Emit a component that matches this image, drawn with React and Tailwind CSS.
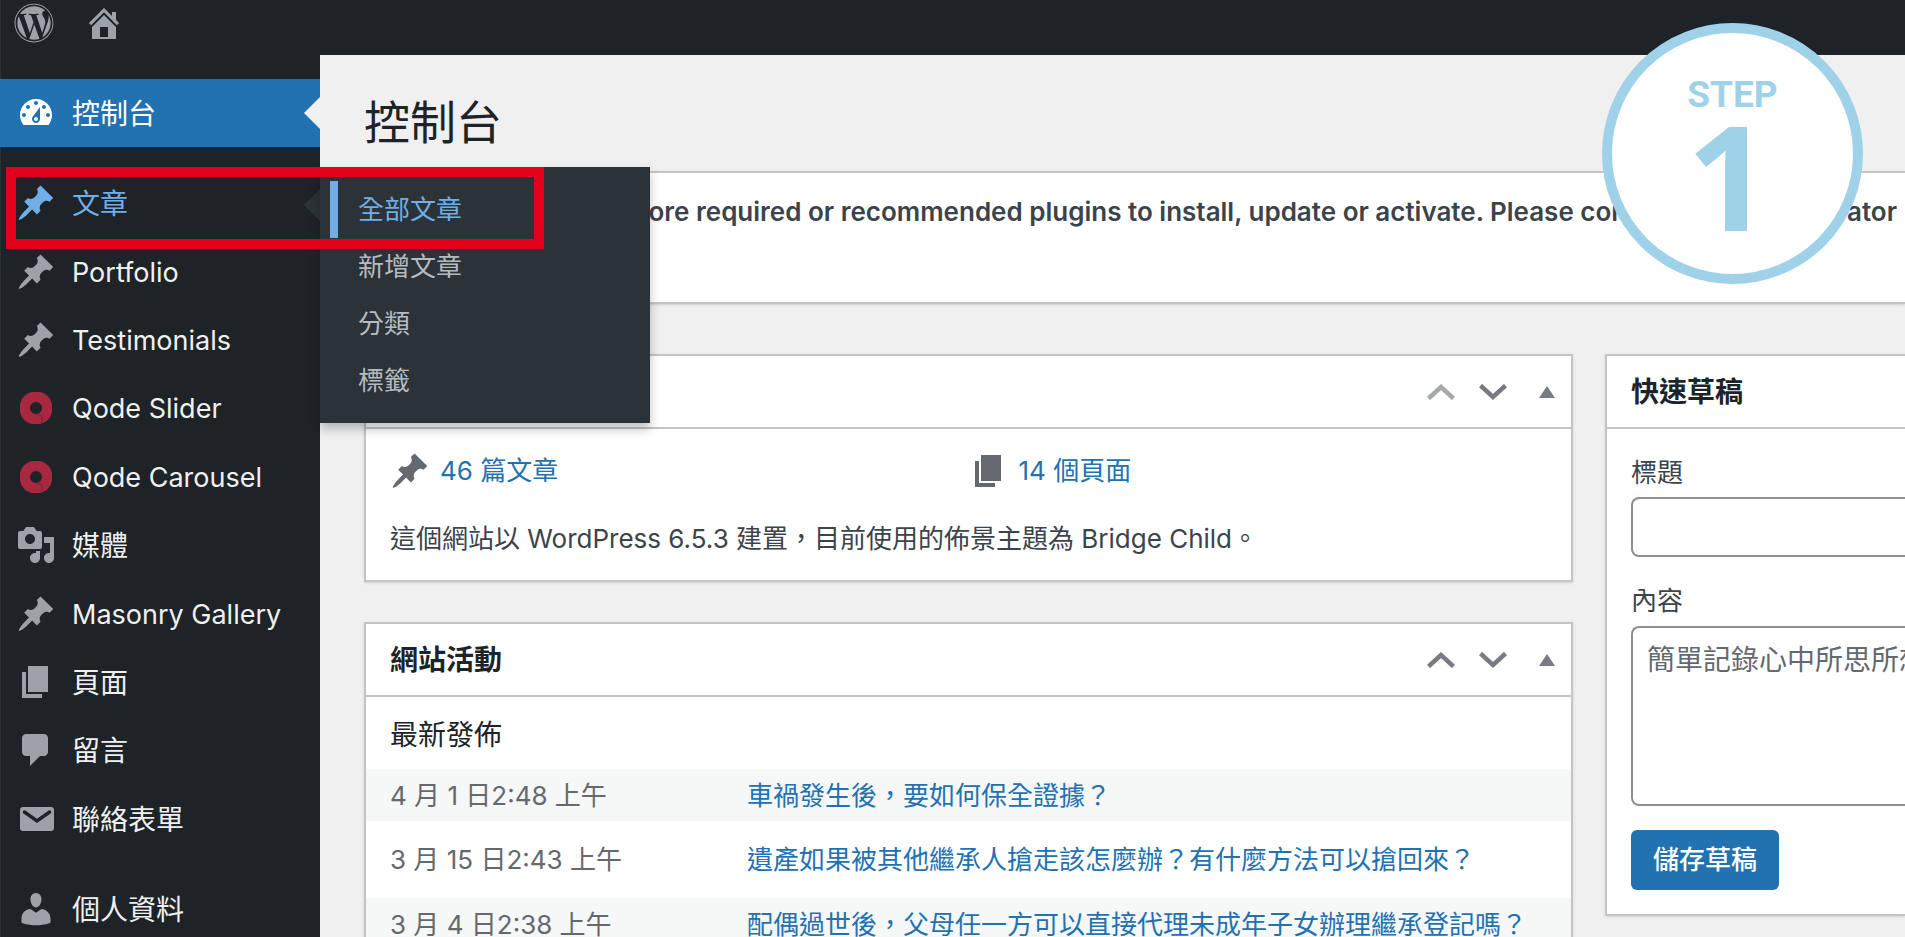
import { FaWordpress } from 'react-icons/fa'

const icons = {
  dashboard: 'M3.76 16h12.48c1.1-1.37 1.76-3.11 1.76-5 0-4.42-3.58-8-8-8s-8 3.58-8 8c0 1.89.66 3.63 1.76 5zM10 4c.55 0 1 .45 1 1s-.45 1-1 1-1-.45-1-1 .45-1 1-1zM6 6c.55 0 1 .45 1 1s-.45 1-1 1-1-.45-1-1 .45-1 1-1zm8 0c.55 0 1 .45 1 1s-.45 1-1 1-1-.45-1-1 .45-1 1-1zm-5.37 5.55L12 7v6c0 1.1-.9 2-2 2s-2-.9-2-2c0-.57.24-1.08.63-1.45zM4 10c.55 0 1 .45 1 1s-.45 1-1 1-1-.45-1-1 .45-1 1-1zm12 0c.55 0 1 .45 1 1s-.45 1-1 1-1-.45-1-1 .45-1 1-1zm-5 3c0-.55-.45-1-1-1s-1 .45-1 1 .45 1 1 1 1-.45 1-1z',
  home: 'M16 8.5l1.53 1.53-1.06 1.06L10 4.6l-6.47 6.49-1.06-1.06L10 2.5l4 4v-2h2v4zm-6-2.46l6 5.99V18H4v-5.97zM12 17v-5H8v5h4z',
  post: 'M10.44 3.02l1.82-1.82 6.36 6.35-1.83 1.82c-1.05-.68-2.48-.57-3.41.36l-.75.75c-.92.93-1.04 2.35-.35 3.41l-1.83 1.82-2.41-2.41-2.8 2.79c-.42.42-3.38 2.71-3.8 2.29s1.86-3.39 2.28-3.81l2.79-2.79L4.1 9.36l1.83-1.82c1.05.69 2.48.57 3.4-.36l.75-.75c.93-.92 1.05-2.35.36-3.41z',
  media: 'M13 11V4c0-.55-.45-1-1-1h-1.67L9 1H5L3.67 3H2c-.55 0-1 .45-1 1v7c0 .55.45 1 1 1h10c.55 0 1-.45 1-1zM7 4.5c1.38 0 2.5 1.12 2.5 2.5S8.38 9.5 7 9.5 4.5 8.38 4.5 7 5.62 4.5 7 4.5zM14 6h5v10.5c0 1.38-1.12 2.5-2.5 2.5S14 17.88 14 16.5s1.12-2.5 2.5-2.5c.17 0 .34.02.5.05V9h-3V6zm-4 8.05V13h2v3.5c0 1.38-1.12 2.5-2.5 2.5S7 17.88 7 16.5 8.12 14 9.5 14c.17 0 .34.02.5.05z',
  page: 'M6 15V2h10v13H6zm-1 1h8v2H3V5h2v11z',
  comments: 'M5 2h9c1.1 0 2 .9 2 2v7c0 1.1-.9 2-2 2h-2l-5 5v-5H5c-1.1 0-2-.9-2-2V4c0-1.1.9-2 2-2z',
  user: 'M10 9.25c-2.27 0-2.73-3.44-2.73-3.44C7 4.02 7.82 2 9.97 2c2.16 0 2.98 2.02 2.71 3.81 0 0-.41 3.44-2.68 3.44zm0 2.57L12.72 10c2.39 0 4.52 2.33 4.52 4.53v2.49s-3.65 1.13-7.24 1.13c-3.65 0-7.24-1.13-7.24-1.13v-2.49c0-2.25 1.94-4.48 4.47-4.48z',
}

const menu = [
  { label: 'Portfolio', icon: 'post', latin: true },
  { label: 'Testimonials', icon: 'post', latin: true },
  { label: 'Qode Slider', icon: 'qode', latin: true },
  { label: 'Qode Carousel', icon: 'qode', latin: true },
  { label: '媒體', icon: 'media' },
  { label: 'Masonry Gallery', icon: 'post', latin: true },
  { label: '頁面', icon: 'page' },
  { label: '留言', icon: 'comments' },
  { label: '聯絡表單', icon: 'mail' },
]

const recent = [
  { date: '4 月 1 日2:48 上午', title: '車禍發生後，要如何保全證據？' },
  { date: '3 月 15 日2:43 上午', title: '遺產如果被其他繼承人搶走該怎麼辦？有什麼方法可以搶回來？' },
  { date: '3 月 4 日2:38 上午', title: '配偶過世後，父母任一方可以直接代理未成年子女辦理繼承登記嗎？' },
]

function Icon({ name, className = '' }) {
  if (name === 'qode') {
    return (
      <svg viewBox="0 0 40 40" className="h-10 w-10 shrink-0">
        <path fillRule="evenodd" fill="#a8283f" d="M15.500 4h9A16.600 16.600 0 0 1 36 15.500v9A16.600 16.600 0 0 1 24.500 36h-9A16.600 16.600 0 0 1 4 24.500v-9A16.600 16.600 0 0 1 15.500 4zM20 14a6 6 0 1 0 0 12a6 6 0 1 0 0-12z" />
        <path d="M21 26.500c3-.5 5 1 5 3.500s-.5 4-1.500 5.500" fill="none" stroke="#7a2639" strokeWidth="1.200" />
      </svg>
    )
  }
  if (name === 'mail') {
    return (
      <svg viewBox="0 0 20 20" className={`h-10 w-10 shrink-0 ${className}`}>
        <rect x="2" y="4" width="17" height="12" rx="1.5" fill="currentColor" />
        <path d="M4.2 6.5l6.3 4.5 6.3-4.5" fill="none" stroke="#1d2327" strokeWidth="1.7" strokeLinecap="round" />
      </svg>
    )
  }
  return (
    <svg viewBox="0 0 20 20" fill="currentColor" className={`h-10 w-10 shrink-0 ${className}`}>
      <path d={icons[name]} />
    </svg>
  )
}

function MenuLink({ label, icon, latin }) {
  return (
    <a href="#" className="flex h-full items-center gap-4 pl-4 text-[#f0f0f1]">
      <Icon name={icon} className="text-[#9ca2a7]" />
      <span className={latin ? 'pt-0.5 text-[27px]' : 'pt-0.5'}>{label}</span>
    </a>
  )
}

function PanelHeader({ title, first }) {
  return (
    <div className="flex h-[73px] items-center justify-between border-b-2 border-[#c3c4c7] pr-2 pl-6">
      <h2 className="text-[28px] leading-10 font-bold text-[#1d2327]">{title}</h2>
      <div className="flex items-center gap-6 text-[#787c82]">
        <button aria-label="上移" className={first ? 'text-[#a7aaad]' : ''}>
          <svg viewBox="0 0 28 16" fill="none" stroke="currentColor" strokeWidth="4.5" className="h-4 w-7">
            <path d="M1.500 14.500L14 3l12.500 11.500" />
          </svg>
        </button>
        <button aria-label="下移">
          <svg viewBox="0 0 28 16" fill="none" stroke="currentColor" strokeWidth="4.5" className="h-4 w-7">
            <path d="M1.500 1.500L14 13l12.500-11.500" />
          </svg>
        </button>
        <button aria-label="切換面板" className="flex w-8 justify-center">
          <svg viewBox="0 0 16 12" fill="currentColor" className="h-3 w-4">
            <path d="M8 0l8 12H0z" />
          </svg>
        </button>
      </div>
    </div>
  )
}

export default function App() {
  return (
    <div className="relative flex h-screen flex-col overflow-hidden bg-[#f0f0f1] font-['Inter','Noto_Sans_CJK_TC',sans-serif] text-[26px] leading-10 text-[#3c434a]">
      {/* Admin bar */}
      <header className="flex h-[55px] shrink-0 items-start gap-[30px] bg-[#1d2327] pt-[3px] pl-[14px] text-[#9ca2a7] shadow-[inset_1px_0_0_#2c3136]">
        <a href="#" aria-label="WordPress" className="flex h-10 w-10 items-center">
          <FaWordpress className="h-10 w-10" />
        </a>
        <a href="#" aria-label="首頁">
          <Icon name="home" />
        </a>
      </header>

      <div className="flex min-h-0 flex-1">
        {/* Side menu */}
        <aside className="relative z-10 w-[320px] shrink-0 bg-[#1d2327] pt-6 text-[28px] shadow-[inset_1px_0_0_#2c3136]">
          <nav>
            <a href="#" className="relative flex h-[68px] items-center gap-4 bg-[#2271b1] pl-4 text-white">
              <Icon name="dashboard" />
              <span className="pt-0.5">控制台</span>
              <span className="absolute top-[18px] right-0 border-y-16 border-r-16 border-y-transparent border-r-[#f0f0f1]" />
            </a>

            <ul className="mt-[22px] grid h-[684px] auto-rows-fr">
              <li className="relative">
                <a href="#" className="flex h-full items-center gap-4 pl-4 text-[#72aee6]">
                  <Icon name="post" />
                  <span className="pt-0.5">文章</span>
                </a>
                <span className="absolute top-5 right-0 border-y-16 border-r-16 border-y-transparent border-r-[#2c3338]" />
                <ul className="absolute -top-0.5 left-full w-[330px] bg-[#2c3338] py-3.5 text-[26px] text-[#b5bbbf] shadow-[0_6px_10px_rgba(0,0,0,0.25)]">
                  <li className="ml-2.5 border-l-8 border-[#72aee6] text-[#72aee6]">
                    <a href="#" className="flex h-[57px] items-center pl-5">全部文章</a>
                  </li>
                  {['新增文章', '分類', '標籤'].map(label => (
                    <li key={label}>
                      <a href="#" className="flex h-[57px] items-center pl-[38px]">{label}</a>
                    </li>
                  ))}
                </ul>
                {/* Red frame around the menu path */}
                <div className="pointer-events-none absolute -top-0.5 left-1.5 h-[82px] w-[538px] border-10 border-[#e3001b]" />
              </li>
              {menu.map(item => (
                <li key={item.label}>
                  <MenuLink {...item} />
                </li>
              ))}
            </ul>

            <div className="mt-[22px] h-[68px]">
              <MenuLink label="個人資料" icon="user" />
            </div>
          </nav>
        </aside>

        {/* Content */}
        <main className="min-w-0 flex-1 overflow-hidden pt-[37px] pl-11">
          <h1 className="text-[46px] leading-[60px] text-[#1d2327]">控制台</h1>

          <div className="mt-[19px] h-[133px] overflow-hidden border-2 border-r-0 border-[#c3c4c7] bg-white pt-[19px] pl-[46px] shadow-sm">
            <p className="font-semibold whitespace-nowrap">
              There are one or more required or recommended plugins to install, update or activate. Please contact the administrator
            </p>
          </div>

          <div className="mt-[50px] flex items-start gap-8">
            <div className="flex min-w-0 flex-1 flex-col gap-10">
              <section className="border-2 border-[#c3c4c7] bg-white shadow-sm">
                <PanelHeader title="" first />
                <div className="px-6 pt-[22px] pb-[21px]">
                  <ul className="grid grid-cols-2 text-[#2271b1]">
                    <li className="flex gap-2.5">
                      <Icon name="post" className="text-[#646970]" />
                      <a href="#">46 篇文章</a>
                    </li>
                    <li className="flex gap-2.5">
                      <Icon name="page" className="text-[#646970]" />
                      <a href="#">14 個頁面</a>
                    </li>
                  </ul>
                  <p className="mt-7">這個網站以 WordPress 6.5.3 建置，目前使用的佈景主題為 Bridge Child。</p>
                </div>
              </section>

              <section className="border-2 border-[#c3c4c7] bg-white shadow-sm">
                <PanelHeader title="網站活動" />
                <h3 className="px-6 pt-[18px] pb-3.5 text-[28px] text-[#1d2327]">最新發佈</h3>
                <ul>
                  {recent.map((post, i) => (
                    <li key={post.date} className={`flex px-6 ${i % 2 ? 'pt-[19px] pb-[18px]' : 'bg-[#f6f7f7] pt-[7px] pb-[5px]'}`}>
                      <span className="w-[357px] shrink-0 text-[#646970]">{post.date}</span>
                      <a href="#" className="whitespace-nowrap text-[#2271b1]">{post.title}</a>
                    </li>
                  ))}
                </ul>
              </section>
            </div>

            {/* Quick draft, runs off the right edge */}
            <section className="w-[300px] shrink-0 border-2 border-r-0 border-[#c3c4c7] bg-white shadow-sm">
              <div className="flex h-[73px] items-center border-b-2 border-[#c3c4c7] pl-6">
                <h2 className="text-[28px] font-bold text-[#1d2327]">快速草稿</h2>
              </div>
              <form className="pt-6 pb-6 pl-6">
                <label htmlFor="title" className="block">標題</label>
                <input id="title" type="text" className="mt-1 block h-[60px] w-full rounded-l-lg border-2 border-r-0 border-[#8c8f94] bg-white px-3.5" />
                <label htmlFor="content" className="mt-6 block">內容</label>
                <textarea
                  id="content"
                  wrap="off"
                  placeholder="簡單記錄心中所思所想"
                  className="mt-[5px] block h-[180px] w-full resize-none overflow-hidden rounded-l-lg border-2 border-r-0 border-[#8c8f94] bg-white py-3 pl-3.5 text-[28px] placeholder:text-[#646970]"
                />
                <button type="button" className="mt-6 h-[60px] rounded-md bg-[#2271b1] px-[22px] font-medium text-white">儲存草稿</button>
              </form>
            </section>
          </div>
        </main>
      </div>

      {/* Step badge */}
      <div className="absolute top-[23px] right-[42px] z-20 flex h-[261px] w-[261px] flex-col items-center rounded-full border-10 border-[#9fd2e8] bg-white pt-10 font-bold text-[#9fd2e8]">
        <span className="font-['Roboto',sans-serif] text-[37px] leading-[44px]">STEP</span>
        <span className="pr-2 font-['Open_Sans',sans-serif] text-[146px] leading-[116px]">1</span>
      </div>
    </div>
  )
}
